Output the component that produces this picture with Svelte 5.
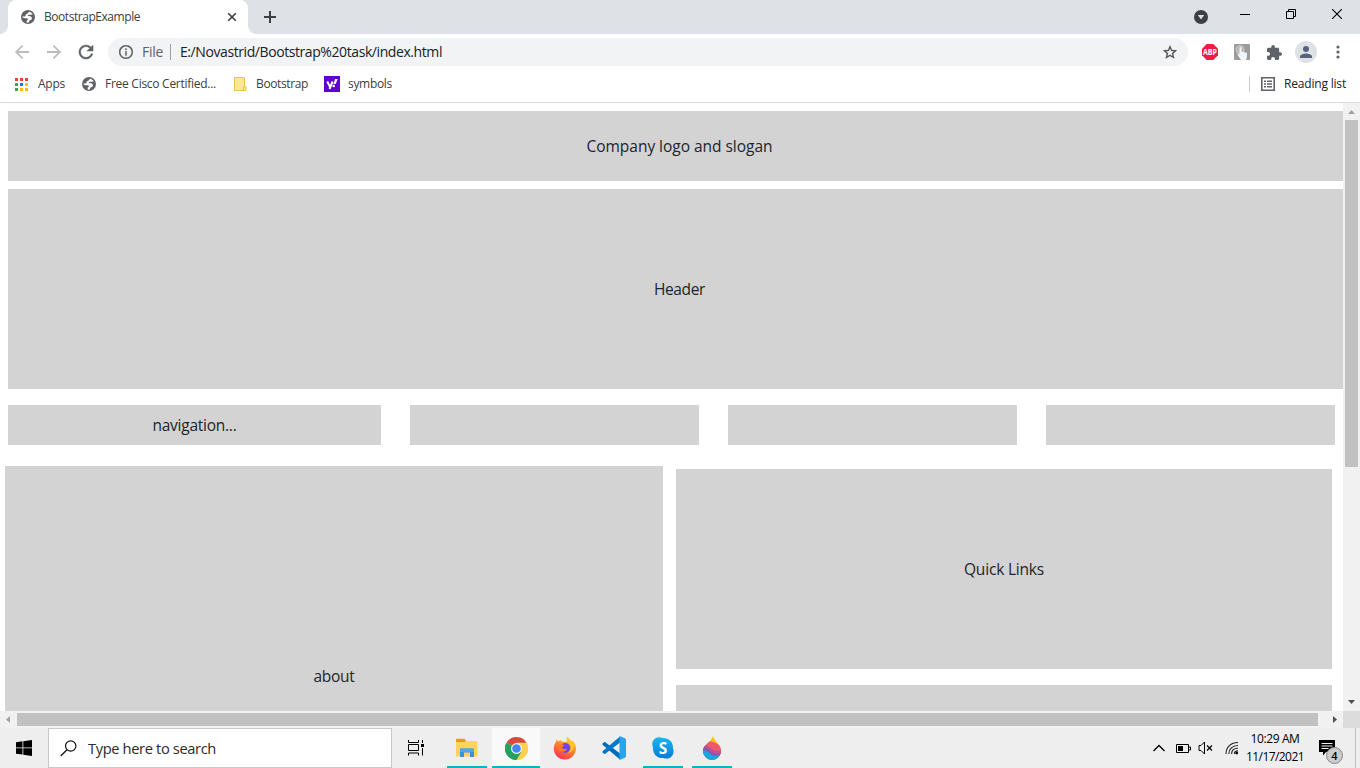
<script>
  // Spreads a label's letters so that it fills the given width.
  function fit(node, width) {
    const natural = node.getBoundingClientRect().width;
    const count = node.textContent.length;
    node.style.letterSpacing = `${(width - natural) / count}px`;
  }

  const appDots = [
    '#ea4335', '#ea4335', '#ea4335',
    '#34a853', '#1a73e8', '#fbbc04',
    '#34a853', '#fbbc04', '#fbbc04'
  ];
</script>

{#snippet globe()}
  <svg class="globe" viewBox="0 0 14 14"><circle cx="7" cy="7" r="7" fill="#5f6368" /><path d="M8 1.700c1.700.3 3 1.200 3.800 2.600l-2 .5H7.500L6.600 6l2.900.2 1.500 1.600-.6 1.900-1.900.8-.8 1.900-2 .3v-1.900l1.500-1.300-1-1.200H3.800L1.500 7.500V6.400h2.600L5 4.300l1.700-.7z" fill="#fff" /></svg>
{/snippet}

<div class="screen">
  <header class="tabs">
    <div class="tab">
      {@render globe()}
      <span class="tab-title"><span use:fit={96}>BootstrapExample</span></span>
      <svg class="tab-close" width="10" height="10" viewBox="0 0 10 10"><path d="M1.2 1.2l7.6 7.6M8.8 1.2L1.2 8.8" stroke="#3c4043" stroke-width="1.6" /></svg>
    </div>
    <svg class="new-tab" width="12" height="12" viewBox="0 0 12 12"><path d="M6 0v12M0 6h12" stroke="#3c4043" stroke-width="2" /></svg>
    <div class="window-buttons">
      <svg width="14" height="14" viewBox="0 0 14 14"><circle cx="7" cy="7" r="7" fill="#3c4043" /><path d="M3.8 5h6.4L7 9.6z" fill="#dee1e6" /></svg>
      <svg class="min" width="10" height="10" viewBox="0 0 10 10"><path d="M0 5.5h10" stroke="#000" /></svg>
      <svg class="restore" width="10" height="10" viewBox="0 0 10 10"><path d="M.5 2.5h7v7h-7zM2.5 2V.5h7v7H8" fill="none" stroke="#000" /></svg>
      <svg class="close" width="10" height="10" viewBox="0 0 10 10"><path d="M0 0l10 10M10 0L0 10" stroke="#000" stroke-width="1.1" /></svg>
    </div>
  </header>

  <div class="toolbar">
    <svg width="16" height="16" viewBox="3 3 18 18"><path d="M20 11H7.83l5.59-5.59L12 4l-8 8 8 8 1.41-1.41L7.83 13H20v-2z" fill="#babcbe" /></svg>
    <svg width="16" height="16" viewBox="3 3 18 18"><path d="M4 11h12.17l-5.59-5.59L12 4l8 8-8 8-1.41-1.41L16.17 13H4z" fill="#babcbe" /></svg>
    <svg width="16" height="16" viewBox="3 3 18 18"><path d="M17.65 6.35C16.2 4.9 14.21 4 12 4c-4.42 0-7.99 3.58-7.99 8s3.57 8 7.99 8c3.73 0 6.84-2.55 7.73-6h-2.08c-.82 2.33-3.04 4-5.65 4-3.31 0-6-2.69-6-6s2.69-6 6-6c1.66 0 3.14.69 4.22 1.78L13 11h7V4l-2.35 2.35z" fill="#5f6368" stroke="#5f6368" stroke-width=".4" /></svg>
    <div class="omnibox">
      <svg width="14" height="14" viewBox="2 2 20 20"><path d="M11 7h2v2h-2zm0 4h2v6h-2zm1-9C6.48 2 2 6.48 2 12s4.48 10 10 10 10-4.48 10-10S17.52 2 12 2zm0 18c-4.41 0-8-3.59-8-8s3.59-8 8-8 8 3.59 8 8-3.59 8-8 8z" fill="#5f6368" stroke="#5f6368" stroke-width=".3" /></svg>
      <span class="scheme"><span use:fit={21}>File</span></span>
      <span class="bar"></span>
      <span class="url"><span use:fit={262}>E:/Novastrid/Bootstrap%20task/index.html</span></span>
      <svg class="star" width="14" height="14" viewBox="2 1.6 20 20"><path d="M22 9.24l-7.19-.62L12 2 9.19 8.63 2 9.24l5.46 4.73L5.82 21 12 17.27 18.18 21l-1.63-7.03L22 9.24zM12 15.4l-3.76 2.27 1-4.28-3.32-2.88 4.38-.38L12 6.1l1.71 4.04 4.38.38-3.32 2.88 1 4.28L12 15.4z" fill="#4a4d51" stroke="#4a4d51" stroke-width=".3" /></svg>
    </div>
    <div class="extensions">
      <div>
        <svg width="16" height="16" viewBox="0 0 16 16"><path d="M4.7 0h6.6L16 4.7v6.6L11.3 16H4.7L0 11.3V4.7z" fill="#ed1e45" /><text x="8" y="10.9" text-anchor="middle" textLength="14" lengthAdjust="spacingAndGlyphs" font-size="8" font-weight="700" fill="#fff" font-family="Open Sans, sans-serif">ABP</text></svg>
      </div>
      <div>
        <svg width="16" height="16" viewBox="0 0 16 16"><rect width="16" height="16" rx="1" fill="#9b9b9b" /><circle cx="6" cy="5.5" r="4" fill="#b4b4b4" stroke="#cfcfcf" /><path d="M5.5 4c0-1.2 2-1.2 2 0v4l1.3-.2 1.3.4 1.4.2 1.5.5v3.500L12 16H7L3.600 10.800c-.5-1 .7-1.400 1.300-.8l.6.7z" fill="#f2f5f9" /></svg>
      </div>
      <div>
        <svg width="15" height="15" viewBox="2 1 21 21"><path d="M20.5 11H19V7c0-1.1-.9-2-2-2h-4V3.500C13 2.120 11.880 1 10.500 1S8 2.120 8 3.500V5H4c-1.100 0-1.990.9-1.990 2v3.800H3.500c1.490 0 2.700 1.210 2.700 2.700s-1.210 2.700-2.700 2.700H2V20c0 1.100.9 2 2 2h3.800v-1.500c0-1.490 1.210-2.700 2.700-2.700 1.490 0 2.700 1.210 2.700 2.700V22H17c1.100 0 2-.9 2-2v-4h1.500c1.380 0 2.500-1.120 2.500-2.500S21.880 11 20.500 11z" fill="#5f6368" /></svg>
      </div>
      <div class="avatar-slot">
        <svg width="22" height="22" viewBox="0 0 22 22"><circle cx="11" cy="11" r="11" fill="#dee1e6" /><circle cx="11" cy="8" r="3" fill="#56617a" /><path d="M5 17v-1.500c0-2 4-3 6-3s6 1 6 3V17z" fill="#56617a" /></svg>
      </div>
      <div>
        <svg width="4" height="14" viewBox="0 0 4 14"><g fill="#5f6368"><circle cx="2" cy="2" r="1.600" /><circle cx="2" cy="7" r="1.600" /><circle cx="2" cy="12" r="1.600" /></g></svg>
      </div>
    </div>
  </div>

  <nav class="bookmarks">
    <div class="apps">{#each appDots as color}<i style="background:{color}"></i>{/each}</div>
    <span class="t-apps"><span use:fit={27}>Apps</span></span>
    {@render globe()}
    <span class="t-cisco"><span use:fit={111}>Free Cisco Certified...</span></span>
    <svg width="13" height="14" viewBox="0 0 13 14"><path d="M.5.5h10v9h1.500v4H.5z" fill="#ffe694" stroke="#e8c64d" /><path d="M9.500 13.500v-3.500h2" fill="none" stroke="#e8c64d" /></svg>
    <span class="t-boot"><span use:fit={52}>Bootstrap</span></span>
    <svg width="16" height="16" viewBox="0 0 16 16"><rect width="16" height="16" fill="#6001d2" /><path d="M3.200 5.500l2.700 5M8.600 5.500L5.500 13" stroke="#fff" stroke-width="2" fill="none" /><path d="M11.200 3h2.500l-2 5H9.300z" fill="#fff" /><circle cx="9.700" cy="10" r="1.300" fill="#fff" /></svg>
    <span class="t-sym"><span use:fit={44}>symbols</span></span>
    <span class="divider"></span>
    <svg width="14" height="14" viewBox="0 0 14 14"><path d="M.8.8h12.400v12.400H.8z" fill="none" stroke="#5f6368" stroke-width="1.600" /><path d="M3 4.200h2M3 7h2M3 9.800h2M6 4.200h5M6 7h5M6 9.800h5" stroke="#5f6368" stroke-width="1.500" /></svg>
    <span class="t-read"><span use:fit={62}>Reading list</span></span>
  </nav>

  <div class="viewport">
    <main class="page">
      <section class="box logo"><span use:fit={186}>Company logo and slogan</span></section>
      <section class="box hero"><span use:fit={51}>Header</span></section>
      <div class="nav-row">
        <div class="box"><span use:fit={84}>navigation...</span></div>
        <div class="box"></div>
        <div class="box"></div>
        <div class="box"></div>
      </div>
      <div class="columns">
        <section class="box about"><span use:fit={41}>about</span></section>
        <div class="side">
          <section class="box"><span use:fit={80}>Quick Links</span></section>
          <section class="box"></section>
        </div>
      </div>
    </main>
    <div class="vscroll">
      <svg width="17" height="17" viewBox="0 0 17 17"><path d="M5 11l3.500-4 3.500 4z" fill="#a3a3a3" /></svg>
      <i></i>
      <svg width="17" height="17" viewBox="0 0 17 17"><path d="M5 6l3.500 4L12 6z" fill="#505050" /></svg>
    </div>
    <div class="hscroll">
      <svg width="17" height="17" viewBox="0 0 17 17"><path d="M10 5L6 8.500l4 3.500z" fill="#a3a3a3" /></svg>
      <i></i>
      <svg width="17" height="17" viewBox="0 0 17 17"><path d="M7 5l4 3.500L7 12z" fill="#505050" /></svg>
    </div>
    <div class="corner"></div>
  </div>

  <footer class="taskbar">
    <div class="start">
      <svg width="16" height="16" viewBox="0 0 16 16"><path d="M0 2.200L6.500 1.300v6.200H0zM7.300 1.200L16 0v7.500H7.300zM0 8.300h6.500v6.300L0 13.700zM7.300 8.300H16V16l-8.700-1.200z" /></svg>
    </div>
    <div class="search">
      <svg width="17" height="17" viewBox="0 0 17 17"><circle cx="10.700" cy="6" r="5.200" fill="none" stroke="#111" stroke-width="1.200" /><path d="M7 9.800L.7 16" stroke="#111" stroke-width="1.300" /></svg>
      <span use:fit={128}>Type here to search</span>
    </div>
    <div class="taskview">
      <svg width="16" height="16" viewBox="0 0 16 16" fill="none" stroke="#000"><path d="M.5 0v2.500h10V0M.5 4.500h10v6H.5zM.5 15.500v-2.500h10v2.500M14.500 0v3M14.500 8v7.500" /><path d="M13 4h3v3h-3z" fill="#000" stroke="none" /></svg>
    </div>
    <div class="pinned">
      <div class="running">
        <svg width="22" height="20" viewBox="0 0 22 20"><path d="M0 2q0-1 1-1h7l2 2H20.500q1 0 1 1v14.500H0z" fill="#ffd35d" /><path d="M0 1.500Q0 .8 1 .8h7.500L10 2.500 8.500 4H0z" fill="#dda20b" /><path d="M4 19v-7.500q0-1 1-1h12q1 0 1 1V19h-4v-4.500H8V19z" fill="#3c92d8" /><path d="M4 14v-2.500q0-1 1-1h12q1 0 1 1V14z" fill="#55a7e3" /></svg>
      </div>
      <div class="running active">
        <svg width="23" height="23" viewBox="0 0 24 24"><circle cx="12" cy="12" r="12" fill="#fff" /><path d="M12 12L1.600 6A12 12 0 0 1 22.400 6z" fill="#d9493d" /><path d="M12 12L22.400 6A12 12 0 0 1 12 24z" fill="#fdd04e" /><path d="M12 12v12A12 12 0 0 1 1.600 6z" fill="#24a15d" /><path d="M12 6h10.400A12 12 0 0 1 12 24l5.200-9z" fill="#fdd04e" /><path d="M1.600 6l5.200 9L12 18l5.200-3L12 24A12 12 0 0 1 1.600 6z" fill="#24a15d" /><circle cx="12" cy="12" r="5.700" fill="#f4f6fb" /><circle cx="12" cy="12" r="4.500" fill="#4587ef" /></svg>
      </div>
      <div>
        <svg width="24" height="24" viewBox="0 0 24 24">
          <defs><linearGradient id="fox" x1=".8" y1="0" x2=".3" y2="1"><stop offset="0" stop-color="#ffe545" /><stop offset=".45" stop-color="#ff8e27" /><stop offset="1" stop-color="#f62e59" /></linearGradient></defs>
          <path d="M14.500.5c1 2 3 2.500 4 4.500l.7-.7c2.500 2 4 5 3.800 8.500C22.700 19 18 23.500 12 23.500S.8 19 .8 12.800c0-2.500.7-5 2.200-6.800l.5-2.500L5.500 5.500 7.500 4l1 1.500 5 .5z" fill="url(#fox)" />
          <circle cx="12.300" cy="12" r="5" fill="#7047da" /><path d="M4 9.500c2-2 4-1.500 7-.8 1 .8-2 1.800-2 3 1 1.300 3 1.500 5 1.100-1 3-5 4-8 1.700z" fill="#ff7a2a" /><path d="M14 1c-1.500 3 2 5 3.500 8 1 3 0 6-3 8 6-1 8-7 5-11C18 5 16 4 14 1z" fill="#ffc532" />
        </svg>
      </div>
      <div>
        <svg width="24" height="24" viewBox="0 0 24 24"><path d="M.5 7.500L2 6.200q.7-.5 1.300 0L18 17.500v6L.8 9q-.7-.8-.3-1.500z" fill="#006db5" /><path d="M.5 16.500L2 17.800q.7.500 1.300 0L18 6.500v-6L.8 15q-.7.800-.3 1.500z" fill="#007acc" /><path d="M17.500 0L23 2.300q1 .5 1 1.700v16q0 1.200-1 1.700L17.500 24z" fill="#27a4ee" /></svg>
      </div>
      <div class="running">
        <svg width="22" height="22" viewBox="0 0 22 22"><defs><linearGradient id="sky" x2="0" y2="1"><stop stop-color="#19b6f1" /><stop offset="1" stop-color="#087cd5" /></linearGradient></defs><path d="M6.500.3C8 0 9.500.6 10.500 1 17 .8 21.300 5 21 11.500c1 2.500.8 5-.8 7.200-2 2.800-5.500 3.500-8.700 2.300C5 21.300.7 17 1 10.500-1 5.500 1.500.8 6.500.3z" fill="url(#sky)" /><text x="11" y="16.500" text-anchor="middle" font-size="15.500" font-weight="700" fill="#fff" font-family="Open Sans, sans-serif">S</text></svg>
      </div>
      <div class="running">
        <svg width="20" height="24" viewBox="0 0 20 24">
          <defs><clipPath id="drop"><path d="M11 0c0 4 8 8 8 15a9 9 0 0 1-18 0C1 8 9 7 11 0z" /></clipPath></defs>
          <g clip-path="url(#drop)"><path d="M0 0h20v24H0z" fill="#ffc20a" /><path d="M0 5c5 0 8 0 11 1s6 3 9 4v13H0z" fill="#ee5a6d" /><path d="M0 9c4-1 7 2 10 4s6 3 10 0v11H0z" fill="#c04f93" /><path d="M0 11c3-1 6 2 9 4.500s6 3 11 1v3c-6 2-10 1-13-2s-5-3-7-2z" fill="#8559b0" /><path d="M0 15c5-1 7 2 10 4 3 1.500 6 1 10-1v6H0z" fill="#19a5df" /></g>
        </svg>
      </div>
    </div>
    <div class="tray">
      <svg width="12" height="8" viewBox="0 0 12 8"><path d="M.5 7L6 1.500 11.500 7" fill="none" stroke="#000" stroke-width="1.300" /></svg>
      <svg class="battery" width="15" height="9" viewBox="0 0 15 9"><path d="M.5.5h12v8H.5zM13 3h1.500v3H13" fill="none" stroke="#000" /><path d="M2 2h5v5H2z" /></svg>
      <svg class="speaker" width="16" height="14" viewBox="0 0 16 14" fill="none" stroke="#000"><path d="M1 4.500h2L6.500 1v12L3 9.500H1z" /><path d="M9 4.500l5 5M14 4.500l-5 5" stroke-width="1.200" /></svg>
      <svg class="wifi" width="14" height="14" viewBox="0 0 14 14" fill="none" stroke="#222"><path d="M1 13C1 6 6 1.500 13 1.500M3.800 13c0-5 3.700-8.500 9.200-8.500M6.600 13c0-3.500 2.500-5.700 6.400-5.700M9.300 13c0-2 1.500-3.200 3.700-3.200" stroke-width="1.100" /><circle cx="11.700" cy="12" r="1.400" fill="#000" stroke="none" /></svg>
      <div class="clock"><span><span use:fit={49}>10:29 AM</span></span><span><span use:fit={58}>11/17/2021</span></span></div>
      <div class="notifications">
        <svg width="16" height="16" viewBox="0 0 16 16"><path d="M0 0h16v12H7l-3 3.500V12H0z" /><path d="M2.500 3.500h11M2.500 6h11M2.500 8.500h7" stroke="#eee" /></svg>
        <span class="badge">4</span>
      </div>
      <span class="peek"></span>
    </div>
  </footer>
</div>

<style>
  :global(body) { margin: 0; overflow: hidden; }
  .screen { width: 1360px; height: 768px; overflow: hidden; display: flex; flex-direction: column; background: #fff; font-family: "Open Sans", "Noto Sans", sans-serif; font-size: 12px; color: #3c4043; white-space: nowrap; }
  .screen * { box-sizing: border-box; }
  svg { display: block; flex: none; }
  .globe { width: 14px; height: 14px; }

  .tabs { height: 34px; flex: none; background: #dee1e6; display: flex; align-items: center; padding-left: 8px; }
  .tab { width: 240px; height: 34px; background: #fff; border-radius: 8px 8px 0 0; display: flex; align-items: center; padding: 0 11px 0 13px; position: relative; }
  .tab::before, .tab::after { content: ""; position: absolute; bottom: 0; width: 8px; height: 8px; }
  .tab::before { left: -8px; background: radial-gradient(circle at 0 0, #dee1e6 7.5px, #fff 8.2px); }
  .tab::after { right: -8px; background: radial-gradient(circle at 100% 0, #dee1e6 7.5px, #fff 8.2px); }
  .tab-title { margin-left: 9px; padding-bottom: 1px; }
  .tab-close { margin-left: auto; }
  .new-tab { margin-left: 16px; }
  .window-buttons { margin-left: auto; display: flex; align-items: center; height: 28px; align-self: flex-start; padding-right: 18px; }
  .window-buttons > svg:first-child { margin-top: 6px; }
  .min { margin-left: 32px; }
  .restore { margin-left: 36px; }
  .close { margin-left: 36px; }

  .toolbar { height: 36px; flex: none; display: flex; align-items: center; gap: 16px; padding-left: 14px; }
  .omnibox { margin-left: -2px; width: 1080px; height: 28px; border-radius: 14px; background: #f1f3f4; display: flex; align-items: center; padding: 0 18px 0 11px; font-size: 14px; }
  .scheme { width: 28px; margin-left: 9px; color: #5f6368; }
  .bar { width: 1px; height: 16px; background: #9aa0a6; }
  .url { margin-left: 9px; color: #202124; }
  .scheme, .url { padding-bottom: 1px; }
  .star { margin-left: auto; margin-right: -7px; }
  .extensions { margin-left: -10px; display: flex; }
  .extensions > div { width: 32px; height: 28px; display: flex; align-items: center; justify-content: center; }

  .bookmarks { height: 33px; flex: none; border-bottom: 1px solid #d9dadc; display: flex; align-items: center; padding: 0 15px 4px; }
  .bookmarks > span:not(.divider) { padding-bottom: 1px; }
  .apps { display: grid; grid-template-columns: repeat(3, 3px); gap: 2px; }
  .apps i { height: 3px; }
  .t-apps { width: 44px; margin-left: 10px; }
  .t-cisco { width: 129px; margin-left: 9px; }
  .t-boot { width: 68px; margin-left: 9px; }
  .t-sym { margin-left: 8px; }
  .divider { width: 1px; height: 16px; background: #c8cbcf; margin-left: auto; margin-right: 11px; }
  .t-read { width: 61px; margin-left: 9px; color: #202124; }

  .viewport { height: 625px; flex: none; display: grid; grid-template: 608px 17px / 1343px 17px; }
  .page { overflow: hidden; padding: 8px 0 0 8px; color: #212529; font-size: 15.5px; background: #fff; }
  .box { background: #d3d3d3; display: flex; align-items: center; justify-content: center; }
  .box > span { padding-bottom: 1px; }
  .logo { width: 1343px; height: 70px; margin-bottom: 8px; }
  .hero { width: 1343px; height: 200px; margin-bottom: 16px; }
  .nav-row { display: grid; grid-template-columns: 373px 289px 289px 289px; gap: 29px; height: 40px; }
  .columns { display: grid; grid-template-columns: 658px 656px; gap: 13px; margin: 21px 0 0 -3px; align-items: start; }
  .about { height: 420px; }
  .side { display: grid; grid-template-rows: 200px 200px; gap: 16px; padding-top: 3px; }

  .vscroll, .hscroll { background: #f1f1f1; display: flex; }
  .vscroll { flex-direction: column; justify-content: space-between; }
  .vscroll i { width: 13px; height: 347px; margin: 0 2px auto; background: #c1c1c1; }
  .hscroll i { width: 1301px; height: 13px; margin: 2px auto 0 0; background: #c1c1c1; }
  .corner { background: #dcdcdc; }

  .taskbar { height: 40px; flex: none; background: #eee; display: flex; color: #000; }
  .start, .taskview { width: 48px; display: flex; align-items: center; justify-content: center; }
  .search { width: 344px; background: #fff; border: 1px solid #c8c8c8; display: flex; align-items: center; gap: 11px; padding-left: 11px; font-size: 14.7px; color: #2b2b2b; }
  .taskview { margin-right: 3px; }
  .pinned { display: flex; gap: 1px; }
  .pinned > div { width: 48px; height: 40px; display: flex; align-items: center; justify-content: center; position: relative; }
  .running::after { content: ""; position: absolute; left: 4px; right: 4px; bottom: 0; height: 2px; background: #00b7c3; }
  .active { background: #f9f9f9; }
  .active::after { left: 0; right: 0; }
  .tray { margin-left: auto; display: flex; align-items: center; }
  .battery { margin-left: 11px; }
  .speaker { margin-left: 7px; }
  .wifi { margin-left: 11px; }
  .clock { width: 60px; margin-left: 6px; display: flex; flex-direction: column; align-items: center; line-height: 18px; font-size: 12px; }
  .notifications { margin-left: 14px; width: 24px; height: 16px; position: relative; }
  .badge { position: absolute; left: 7px; top: 7px; width: 17px; height: 17px; border: 1px solid #888; border-radius: 50%; background: #ccc; text-align: center; font-size: 11px; line-height: 15px; font-weight: 600; }
  .peek { width: 1px; height: 40px; background: #c0c0c0; margin: 0 4px 0 12px; }
</style>
